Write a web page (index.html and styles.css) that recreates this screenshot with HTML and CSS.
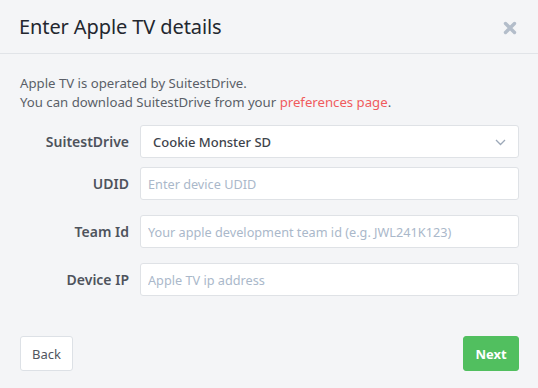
FILE: index.html
```html
<!DOCTYPE html>
<html>
<head>
<meta charset="utf-8">
<link rel="stylesheet" href="styles.css">
</head>
<body>
<div class="modal">
  <div class="header">
    <h1 class="title">Enter Apple TV details</h1>
    <span class="close" aria-label="Close">
      <svg width="14" height="14" viewBox="0 0 14 14"><path d="M2.5 2.5 L11.5 11.5 M11.5 2.5 L2.5 11.5" stroke="#b3bdca" stroke-width="3.4" stroke-linecap="round"/></svg>
    </span>
  </div>
  <div class="content">
    <p class="intro">Apple TV is operated by SuitestDrive.<br>You can download SuitestDrive from your <a class="link" href="#">preferences page</a>.</p>
    <div class="form">
      <div class="row row-first">
        <label class="label">SuitestDrive</label>
        <div class="select">
          <span class="select-value">Cookie Monster SD</span>
          <svg class="chevron" width="11" height="7" viewBox="0 0 11 7"><path d="M1 1 L5.5 5.5 L10 1" fill="none" stroke="#9ca8b8" stroke-width="1.3"/></svg>
        </div>
      </div>
      <div class="row row-second">
        <label class="label">UDID</label>
        <input class="input" placeholder="Enter device UDID">
      </div>
      <div class="row">
        <label class="label">Team Id</label>
        <input class="input" placeholder="Your apple development team id (e.g. JWL241K123)">
      </div>
      <div class="row">
        <label class="label">Device IP</label>
        <input class="input" placeholder="Apple TV ip address">
      </div>
    </div>
  </div>
  <div class="footer">
    <button class="btn btn-back">Back</button>
    <button class="btn btn-next">Next</button>
  </div>
</div>
</body>
</html>
```
FILE: styles.css
```css
* { box-sizing: border-box; }
html, body { margin: 0; padding: 0; }
body {
  background: #f4f5f7;
  font-family: "Noto Sans", "Open Sans", sans-serif;
  width: 538px;
  height: 388px;
  overflow: hidden;
}
.modal { width: 538px; }
.header {
  height: 54px;
  border-bottom: 1px solid #e1e4e8;
  display: flex;
  align-items: center;
  justify-content: space-between;
  padding: 0 21px 0 19px;
}
.title {
  margin: 0;
  font-size: 20px;
  font-weight: 400;
  color: #23272f;
  letter-spacing: -0.1px;
}
.close { display: flex; margin-top: 2px; }
.content { padding: 20px 19px 0 20px; }
.intro {
  margin: 0;
  font-size: 13.2px;
  line-height: 19px;
  color: #5a5f68;
}
.link { color: #f05b5d; text-decoration: none; }
.form { margin-top: 13px; }
.row {
  display: grid;
  grid-template-columns: 109px 1fr;
  column-gap: 11px;
  align-items: center;
  margin-bottom: 15px;
}
.row-first { margin-bottom: 9px; }
.label {
  text-align: right;
  font-size: 14px;
  font-weight: 600;
  color: #4e535c;
}
.select, .input {
  height: 33px;
  background: #fff;
  border: 1px solid #dfe2e6;
  border-radius: 3px;
}
.select {
  display: flex;
  align-items: center;
  justify-content: space-between;
  padding: 0 12px 0 12px;
}
.select-value {
  font-size: 13px;
  font-weight: 500;
  color: #3e434b;
}
.chevron { margin-top: 1px; }
.input {
  width: 100%;
  padding: 0 7px;
  font-family: inherit;
  font-size: 12.7px;
  color: #3e434b;
  outline: none;
}
.input::placeholder { color: #aab8ca; }
.footer {
  display: flex;
  justify-content: space-between;
  padding: 25px 19px 0 20px;
}
.btn {
  height: 35px;
  border-radius: 3px;
  font-family: inherit;
  font-size: 13px;
  cursor: pointer;
}
.btn-back {
  width: 53px;
  background: #fff;
  border: 1px solid #dde1e6;
  color: #50555e;
}
.btn-next {
  width: 56px;
  background: #51bf5f;
  border: 1px solid #51bf5f;
  color: #fff;
  font-weight: 700;
}
```
